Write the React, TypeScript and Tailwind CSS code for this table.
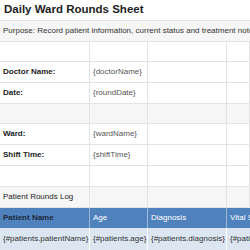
const font = { fontFamily: '"Liberation Sans", Arial, sans-serif' };

type Row = { h: string; bg: string; cells: string[]; kind?: "label" | "head" | "data" };

const rows: Row[] = [
  { h: "h-[20px]", bg: "bg-white", cells: ["", "", "", ""] },
  { h: "h-[21px]", bg: "bg-white", cells: ["Doctor Name:", "{doctorName}", "", ""], kind: "label" },
  { h: "h-[21px]", bg: "bg-white", cells: ["Date:", "{roundDate}", "", ""], kind: "label" },
  { h: "h-[20px]", bg: "bg-[#f6f6f6]", cells: ["", "", "", ""] },
  { h: "h-[21px]", bg: "bg-white", cells: ["Ward:", "{wardName}", "", ""], kind: "label" },
  { h: "h-[21px]", bg: "bg-white", cells: ["Shift Time:", "{shiftTime}", "", ""], kind: "label" },
  { h: "h-[21px]", bg: "bg-white", cells: ["", "", "", ""] },
  { h: "h-[21px]", bg: "bg-[#f6f6f6]", cells: ["Patient Rounds Log", "", "", ""] },
];

function Cells({ row }: { row: Row }) {
  return (
    <div className={`grid grid-cols-[90px_58px_79px_1fr] ${row.h} ${row.bg}`}>
      {row.cells.map((c, i) => (
        <div
          key={i}
          className={`flex items-center overflow-hidden whitespace-nowrap border-b border-r border-[#e3e3e3] pl-[3px] text-[8px] ${
            row.kind === "label" && i === 0 ? "font-bold text-[#222]" : i === 0 ? "text-[#222]" : "text-[#555]"
          }`}
        >
          {c}
        </div>
      ))}
    </div>
  );
}

export default function App() {
  return (
    <div className="w-[250px] h-[250px] overflow-hidden bg-white" style={font}>
      <div className="flex h-[21px] items-center border-b border-[#e3e3e3] pl-[4px] text-[11.5px] font-bold text-[#222]">
        Daily Ward Rounds Sheet
      </div>
      <div className="flex h-[21px] items-center overflow-hidden whitespace-nowrap border-b border-[#e3e3e3] bg-[#f6f6f6] pl-[3px] text-[8px] text-[#333]">
        Purpose: Record patient information, current status and treatment notes
      </div>
      {rows.map((r, i) => (
        <Cells key={i} row={r} />
      ))}
      <div className="grid h-[20px] grid-cols-[90px_58px_79px_1fr] bg-[#4f81bd] text-[8px]">
        <div className="flex items-center whitespace-nowrap border-r border-[#9db7d9] pl-[3px] font-bold text-[#1c2a3a]">Patient Name</div>
        <div className="flex items-center whitespace-nowrap border-r border-[#9db7d9] pl-[3px] text-white">Age</div>
        <div className="flex items-center whitespace-nowrap border-r border-[#9db7d9] pl-[3px] text-white">Diagnosis</div>
        <div className="flex items-center overflow-hidden whitespace-nowrap pl-[3px] text-white">Vital Signs</div>
      </div>
      <div className="grid h-[22px] grid-cols-[90px_58px_79px_1fr] bg-[#dce6f1] text-[8px] text-[#333]">
        <div className="flex items-center overflow-hidden whitespace-nowrap border-r border-white pl-[3px]">{"{#patients.patientName}"}</div>
        <div className="flex items-center overflow-hidden whitespace-nowrap border-r border-white pl-[3px]">{"{#patients.age}"}</div>
        <div className="flex items-center overflow-hidden whitespace-nowrap border-r border-white pl-[3px]">{"{#patients.diagnosis}"}</div>
        <div className="flex items-center overflow-hidden whitespace-nowrap pl-[3px]">{"{#patients.vitalSigns}"}</div>
      </div>
    </div>
  );
}
